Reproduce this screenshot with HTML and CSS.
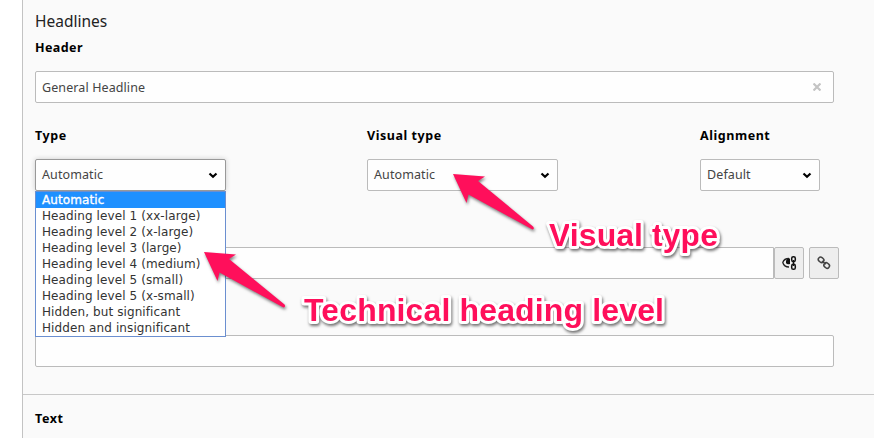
FILE: index.html
```
<!DOCTYPE html>
<html lang="en">
<head>
<meta charset="utf-8">
<title>Headlines</title>
<link rel="stylesheet" href="styles.css">
</head>
<body>
<main class="panel">
  <section class="palette">
    <h2 class="palette-title">Headlines</h2>
    <div class="label label-header">Header</div>
    <div class="input header-input"><span class="value-low">General Headline</span>
      <svg class="clear" width="8" height="8" viewBox="0 0 8 8"><path d="M.5 .5L7.500 7.500M7.500 .5L.5 7.500"/></svg>
    </div>
    <div class="columns">
      <div class="field">
        <div class="label">Type</div>
        <div class="input select focused"><span>Automatic</span><svg class="caret" width="10" height="7" viewBox="0 0 10 7"><path d="M1.5 1.5L5 4.8L8.5 1.5"/></svg>
          <ul class="options">
            <li class="selected">Automatic</li>
            <li>Heading level 1 (xx-large)</li>
            <li>Heading level 2 (x-large)</li>
            <li>Heading level 3 (large)</li>
            <li>Heading level 4 (medium)</li>
            <li>Heading level 5 (small)</li>
            <li>Heading level 5 (x-small)</li>
            <li>Hidden, but significant</li>
            <li>Hidden and insignificant</li>
          </ul>
        </div>
      </div>
      <div class="field">
        <div class="label">Visual type</div>
        <div class="input select"><span>Automatic</span><svg class="caret" width="10" height="7" viewBox="0 0 10 7"><path d="M1.5 1.5L5 4.8L8.5 1.5"/></svg></div>
      </div>
      <div class="field">
        <div class="label">Alignment</div>
        <div class="input select narrow"><span>Default</span><svg class="caret" width="10" height="7" viewBox="0 0 10 7"><path d="M1.5 1.5L5 4.8L8.5 1.5"/></svg></div>
      </div>
    </div>
    <div class="link-row">
      <div class="input link-input"></div>
      <div class="button joined">
        <svg width="16" height="16" viewBox="0 0 16 16"><path class="thin" d="M8 3.500Q3 3.500 1.800 7.500Q3 12 8 12"/><path class="solid" d="M5 5.500Q6 3 9 3.500V9Q6 10 5 8Z"/><g class="chain"><rect x="10.7" y="1.7" width="3.6" height="5" rx="1.6"/><rect x="10.7" y="9.3" width="3.6" height="5" rx="1.6"/><path d="M12.5 5V11"/></g></svg>
      </div>
      <div class="button">
        <svg width="16" height="16" viewBox="0 0 16 16"><g class="link"><rect x="2.2" y="2.5" width="5.8" height="4.6" rx="2.2" transform="rotate(40 5.100 4.8)"/><rect x="7.8" y="8.2" width="5.8" height="4.6" rx="2.2" transform="rotate(40 10.7 10.5)"/><path d="M6 6L9.8 9.3"/></g></svg>
      </div>
    </div>
    <div class="input bottom-input"></div>
  </section>
  <section class="palette next">
    <div class="label">Text</div>
  </section>
</main>
<svg class="annotations" width="874" height="438" viewBox="0 0 874 438">
  <g class="marks">
    <path d="M453 174L485 176.5L478 181L533 226.5Q535 229 532.5 229.5L468.500 194.500L466.500 203Z"/>
    <path d="M204 252L236 254.500L229 259L284.500 304.500Q286 307 283.500 307.500L219.500 272.500L217.500 281Z"/>
  </g>
  <g class="captions">
    <text x="549" y="246" textLength="169">Visual type</text>
    <text x="304" y="321" textLength="360">Technical heading level</text>
  </g>
</svg>
</body>
</html>
```
FILE: styles.css
```
* { box-sizing: border-box; }
body {
  margin: 0;
  height: 438px;
  overflow: hidden;
  background: #fff;
  color: #333;
  font: 12px/16px "Noto Sans", sans-serif;
}
.panel {
  margin-left: 22px;
  height: 438px;
  border-left: 1px solid #c3c3c3;
  background: #fafafa;
}
.palette { padding: 11px 0 27px 12px; }
.palette-title {
  margin: 0 0 9px;
  font-size: 15.5px;
  font-weight: 400;
  line-height: 20px;
  color: #222;
}
.label {
  font-weight: 700;
  color: #000;
  font-size: 12.5px;
  line-height: 16px;
  letter-spacing: .55px;
}
.label-header { letter-spacing: .4px; }
.input {
  display: flex;
  align-items: center;
  justify-content: space-between;
  height: 32px;
  padding: 0 6px;
  border: 1px solid #bbb;
  border-radius: 2px;
  background: #fefefe;
  font-size: 12.5px;
  letter-spacing: .1px;
  color: #444;
}
.header-input { width: 799px; margin-top: 15px; padding-right: 12px; }
.value-low { padding-top: 2px; }
.clear { fill: none; stroke: #c4c4c4; stroke-width: 2.2; }
.columns {
  display: grid;
  grid-template-columns: 332px 333px 120px;
  margin-top: 25px;
}
.select { position: relative; width: 191px; margin-top: 15px; padding-right: 7px; }
.narrow { width: 120px; }
.focused { border-color: #999; box-shadow: 0 0 5px #ccc; }
.caret { fill: none; stroke: #000; stroke-width: 2.2; }
.options {
  position: absolute;
  z-index: 1;
  top: 31px;
  left: -1px;
  width: 191px;
  margin: 0;
  padding: 0;
  border: 1px solid #6b8fd0;
  background: #fff;
  list-style: none;
  color: #333;
  font: 12px/16px "DejaVu Sans", sans-serif;
}
.options li { height: 16px; padding-left: 6px; white-space: nowrap; }
.options .selected { background: #1e90ff; color: #fff; -webkit-text-stroke: .35px #fff; }
.link-row { display: flex; margin-top: 56px; }
.link-input { width: 739px; border-radius: 2px 0 0 2px; }
.button {
  display: flex;
  align-items: center;
  justify-content: center;
  width: 30px;
  height: 32px;
  margin-left: 5px;
  border: 1px solid #bbb;
  border-radius: 2px;
  background: #eee;
}
.joined { margin-left: 0; }
.thin { fill: none; stroke: #222; stroke-width: 1.3; }
.solid { fill: #111; }
.chain { fill: none; stroke: #111; stroke-width: 1.5; }
.link { fill: none; stroke: #444; stroke-width: 1.5; }
.bottom-input { width: 799px; margin-top: 56px; }
.next { padding-top: 16px; border-top: 1px solid #c8c8c8; }
.annotations { position: absolute; z-index: 2; top: 0; left: 0; }
.marks { fill: #ff0f5b; filter: drop-shadow(1px 2px 1.5px rgba(0, 0, 0, .5)); }
.captions {
  fill: #ff0f5b;
  stroke: #fff;
  stroke-width: 6px;
  stroke-linejoin: round;
  paint-order: stroke;
  font: 700 32px "Liberation Sans", sans-serif;
  filter: drop-shadow(1px 2px 1.5px rgba(0, 0, 0, .55));
}
```
